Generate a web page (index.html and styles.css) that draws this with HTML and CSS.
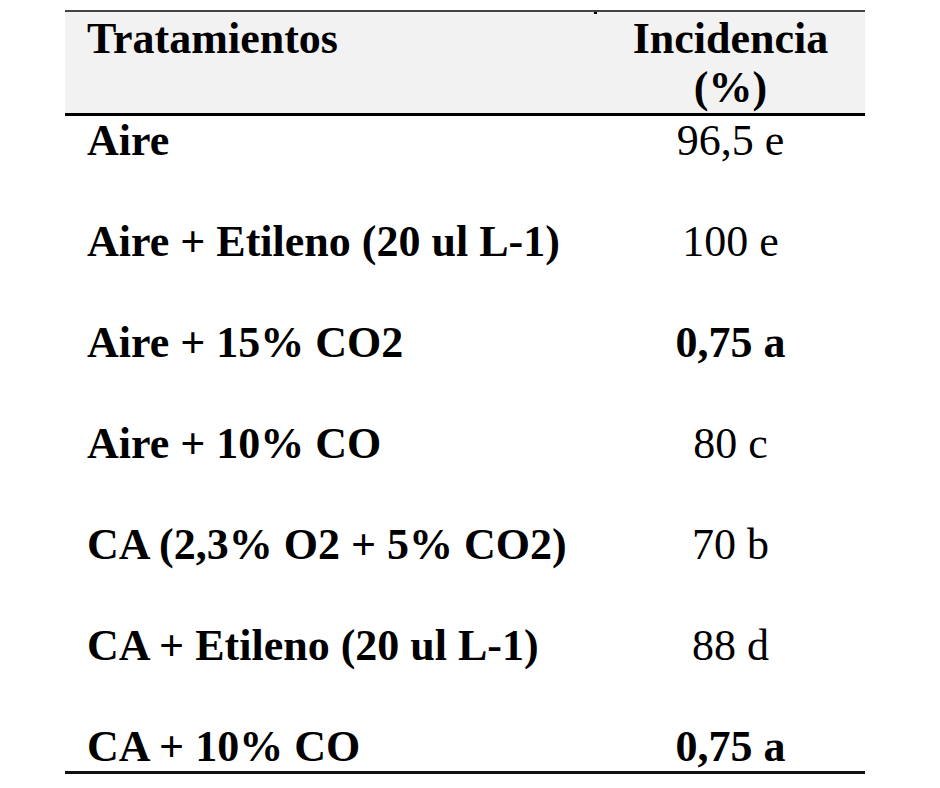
FILE: index.html
```html
<!DOCTYPE html>
<html lang="es">
<head>
<meta charset="utf-8">
<title>Incidencia por tratamiento</title>
<link rel="stylesheet" href="styles.css">
</head>
<body>
<table class="results">
  <thead>
    <tr>
      <th class="col-name">Tratamientos</th>
      <th class="col-value">Incidencia<br>(%)</th>
    </tr>
  </thead>
  <tbody>
    <tr><td class="name">Aire</td><td class="value">96,5 e</td></tr>
    <tr><td class="name">Aire + Etileno (20 ul L-1)</td><td class="value">100 e</td></tr>
    <tr><td class="name">Aire + 15% CO2</td><td class="value best">0,75 a</td></tr>
    <tr><td class="name">Aire + 10% CO</td><td class="value">80 c</td></tr>
    <tr><td class="name">CA (2,3% O2 + 5% CO2)</td><td class="value">70 b</td></tr>
    <tr><td class="name">CA + Etileno (20 ul L-1)</td><td class="value">88 d</td></tr>
    <tr><td class="name">CA + 10% CO</td><td class="value best">0,75 a</td></tr>
  </tbody>
</table>
</body>
</html>
```
FILE: styles.css
```css
html, body {
  margin: 0;
  padding: 0;
  background: #ffffff;
}

body {
  padding: 10px 0 0 65px;
  font-family: "Liberation Serif", "Times New Roman", serif;
  color: #000000;
}

.results {
  width: 800px;
  border-collapse: collapse;
  border-spacing: 0;
  font-size: 44px;
  line-height: 49px;
}

.results thead th {
  background: #f2f2f2;
  border-top: 2px solid #444444;
  border-bottom: 3px solid #000000;
  padding: 2px 22px 1px 22px;
  font-weight: 700;
  vertical-align: top;
}

.results .col-name {
  text-align: left;
}

.results .col-value {
  width: 269px;
  box-sizing: border-box;
  text-align: center;
  position: relative;
  padding-left: 0;
  padding-right: 0;
}

.results .col-value::before {
  content: "";
  position: absolute;
  left: -2px;
  top: 0;
  width: 3px;
  height: 2px;
  background: #000000;
}

.results tbody td {
  padding: 52px 22px 0 22px;
  vertical-align: top;
}

.results tbody tr:first-child td {
  padding-top: 0;
}

.results tbody tr:last-child td {
  border-bottom: 3px solid #111111;
}

.results .name {
  font-weight: 700;
  text-align: left;
}

.results .value {
  font-weight: 400;
  text-align: center;
  padding-left: 0;
  padding-right: 0;
}

.results .value.best {
  font-weight: 700;
}
```
